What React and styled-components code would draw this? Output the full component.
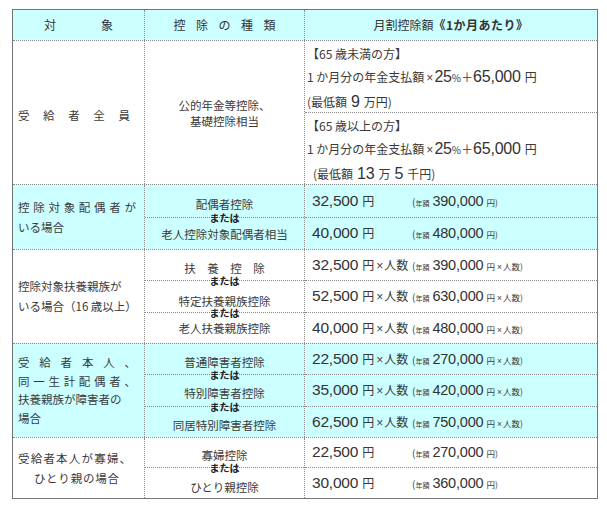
import React from "react";
import styled, { createGlobalStyle } from "styled-components";

const TINT = "#ccffff";
const LINE = "1px dotted #8a8a8a";

const GlobalStyle = createGlobalStyle`
  html, body {
    margin: 0;
    padding: 0;
    background: #fff;
  }
  body {
    font-family: "Noto Sans CJK JP", "Noto Sans", sans-serif;
    color: #3a3a3a;
  }
`;

const Page = styled.div`
  padding: 9px 0 0 12px;
`;

const Table = styled.div`
  width: 586px;
  border: 1.5px solid #767676;
  box-sizing: border-box;
`;

const Row = styled.div`
  display: grid;
  grid-template-columns: 132px 160px 1fr;
  height: ${(p) => p.$h}px;
  box-sizing: border-box;
  background: ${(p) => (p.$tint ? TINT : "#fff")};
  & + & {
    border-top: ${LINE};
  }
`;

const Col = styled.div`
  display: flex;
  flex-direction: column;
  min-width: 0;
  box-sizing: border-box;
  border-right: ${(p) => (p.$last ? "none" : LINE)};
`;

const HeadCell = styled(Col)`
  align-items: center;
  justify-content: center;
  font-size: 12px;
  color: #333;
`;

const Spread = styled.div`
  display: flex;
  gap: ${(p) => p.$gap}px;
`;

const Bold = styled.span`
  font-weight: 700;
  letter-spacing: 0.5px;
`;

const LabelCol = styled(Col)`
  justify-content: center;
  padding: ${(p) => p.$pt || 0}px ${(p) => p.$pr ?? 8}px 0 5px;
  font-size: 11.5px;
`;

const Line = styled.div`
  line-height: ${(p) => p.$lh}px;
  white-space: nowrap;
  letter-spacing: ${(p) => p.$ls || 0}px;
  text-align: ${(p) => (p.$justify ? "justify" : p.$center ? "center" : "left")};
  text-align-last: ${(p) => (p.$justify ? "justify" : p.$center ? "center" : "left")};
`;

const Sub = styled.div`
  position: relative;
  height: ${(p) => p.$h}px;
  box-sizing: border-box;
  display: flex;
  align-items: center;
  justify-content: ${(p) => (p.$center ? "center" : "flex-start")};
  padding-top: ${(p) => (p.$shift || 0) * 2}px;
  font-size: 11.5px;
  & + & {
    border-top: ${LINE};
  }
`;

const KindText = styled.div`
  text-align: center;
  line-height: ${(p) => p.$lh || 13}px;
  white-space: nowrap;
`;

const Or = styled.span`
  position: absolute;
  top: -5px;
  left: 50%;
  transform: translateX(-50%);
  font-size: 10px;
  line-height: 10px;
  font-weight: 700;
  color: #222;
  white-space: nowrap;
`;

const Formula = styled.div`
  height: ${(p) => p.$h}px;
  box-sizing: border-box;
  padding: 1px 0 0 2px;
  font-size: 12px;
  line-height: 23px;
  white-space: nowrap;
  & + & {
    border-top: ${LINE};
  }
`;

const Indent = styled.div`
  padding-left: ${(p) => p.$pl || 0}px;
`;

const Num = styled.span`
  font-family: "Liberation Sans", Arial, sans-serif;
  font-size: ${(p) => p.$size}px;
  color: #333;
  letter-spacing: ${(p) => p.$ls ?? -0.2}px;
  margin-left: ${(p) => p.$ml || 0}px;
`;

const Jp = styled.span`
  font-size: ${(p) => p.$size}px;
  color: #3a3a3a;
  margin-left: ${(p) => p.$ml || 0}px;
`;

const Times = styled.span`
  font-family: "Liberation Sans", Arial, sans-serif;
  font-size: ${(p) => p.$size}px;
  color: #444;
  margin: 0 1px 0 2px;
`;

const Amount = styled.div`
  display: flex;
  align-items: baseline;
  padding-left: 7px;
  white-space: nowrap;
`;

const Main = styled.span`
  width: 100px;
  flex-shrink: 0;
`;

const rows = [
  {
    h: 65,
    tint: true,
    subs: [32, 32],
    lh: 20,
    label: [
      { t: "控 除 対 象 配 偶 者 が", j: true },
      { t: "いる場合" },
    ],
    items: [
      { kind: "配偶者控除", shift: 4, amt: "32,500", annual: "390,000" },
      { kind: "老人控除対象配偶者相当", shift: 1, amt: "40,000", annual: "480,000" },
    ],
  },
  {
    h: 94,
    subs: [30, 32, 31],
    lh: 20,
    label: [{ t: "控除対象扶養親族が" }, { t: "いる場合（16 歳以上）" }],
    items: [
      { kind: "扶　養　控　除", shift: 4, amt: "32,500", annual: "390,000", per: true },
      { kind: "特定扶養親族控除", shift: 5, amt: "52,500", annual: "630,000", per: true },
      { kind: "老人扶養親族控除", shift: 1, amt: "40,000", annual: "480,000", per: true },
    ],
  },
  {
    h: 94,
    tint: true,
    subs: [30, 32, 31],
    lh: 18.5,
    label: [
      { t: "受 給 者 本 人 、", j: true },
      { t: "同 一 生 計 配 偶 者 、", j: true },
      { t: "扶養親族が障害者の" },
      { t: "場合" },
    ],
    items: [
      { kind: "普通障害者控除", shift: 3.5, amt: "22,500", annual: "270,000", per: true },
      { kind: "特別障害者控除", shift: 3, amt: "35,000", annual: "420,000", per: true },
      { kind: "同居特別障害者控除", shift: 4, amt: "62,500", annual: "750,000", per: true },
    ],
  },
  {
    h: 61.5,
    subs: [29, 31.5],
    lh: 20,
    label: [
      { t: "受給者本人が寡婦、", ls: 1.2 },
      { t: "ひとり親の場合", c: true, ls: 0.8 },
    ],
    items: [
      { kind: "寡婦控除", shift: 3.5, amt: "22,500", annual: "270,000" },
      { kind: "ひとり親控除", shift: 5, amt: "30,000", annual: "360,000" },
    ],
  },
];

function AmountLine({ amt, annual, per }) {
  return (
    <Amount>
      <Main>
        <Num $size={15.5}>{amt}</Num>
        <Jp $size={12} $ml={4}>円</Jp>
        {per && (
          <>
            <Times $size={12}>×</Times>
            <Jp $size={12}>人数</Jp>
          </>
        )}
      </Main>
      <Jp $size={10}>(</Jp>
      <Jp $size={7}>年額</Jp>
      <Num $size={14.5} $ml={3}>{annual}</Num>
      <Jp $size={8.5} $ml={3}>円</Jp>
      {per && (
        <>
          <Times $size={8.5}>×</Times>
          <Jp $size={8.5}>人数</Jp>
        </>
      )}
      <Jp $size={8.5}>)</Jp>
    </Amount>
  );
}

function Label({ lines, lh, pr, pt }) {
  return (
    <LabelCol $pr={pr} $pt={pt}>
      {lines.map((l, i) => (
        <Line key={i} $lh={lh} $justify={l.j} $center={l.c} $ls={l.ls}>
          {l.t}
        </Line>
      ))}
    </LabelCol>
  );
}

function Monthly({ head }) {
  return (
    <>
      <div>{head}</div>
      <div>
        <Jp $size={12}>1 か月分の年金支払額</Jp>
        <Times $size={12}>×</Times>
        <Num $size={16}>25</Num>
        <Jp $size={10}>%</Jp>
        <Jp $size={12}>＋</Jp>
        <Num $size={16}>65,000</Num>
        <Jp $size={12} $ml={4}>円</Jp>
      </div>
    </>
  );
}

export default function App() {
  return (
    <>
      <GlobalStyle />
      <Page>
        <Table>
          <Row $h={29.5} $tint>
            <HeadCell>
              <Spread $gap={45}>
                <span>対</span>
                <span>象</span>
              </Spread>
            </HeadCell>
            <HeadCell>
              <Spread $gap={10.5}>
                {"控除の種類".split("").map((c) => (
                  <span key={c}>{c}</span>
                ))}
              </Spread>
            </HeadCell>
            <HeadCell $last>
              <div>
                月割控除額<Bold>《1か月あたり》</Bold>
              </div>
            </HeadCell>
          </Row>

          <Row $h={144}>
            <Label lines={[{ t: "受 給 者 全 員", j: true }]} lh={20} pr={14} pt={5} />
            <Col>
              <Sub $h={143} $center $shift={1}>
                <KindText $lh={16}>
                  公的年金等控除、
                  <br />
                  　基礎控除相当
                </KindText>
              </Sub>
            </Col>
            <Col $last>
              <Formula $h={71}>
                <Monthly head="【65 歳未満の方】" />
                <div>
                  <Jp $size={12}>(最低額</Jp>
                  <Num $size={16} $ml={4}>9</Num>
                  <Jp $size={12} $ml={4}>万円)</Jp>
                </div>
              </Formula>
              <Formula $h={72}>
                <Monthly head="【65 歳以上の方】" />
                <Indent $pl={6}>
                  <Jp $size={12}>(最低額</Jp>
                  <Num $size={16} $ml={4}>13</Num>
                  <Jp $size={12} $ml={4}>万</Jp>
                  <Num $size={16} $ml={4}>5</Num>
                  <Jp $size={12} $ml={4}>千円)</Jp>
                </Indent>
              </Formula>
            </Col>
          </Row>

          {rows.map((r, ri) => (
            <Row key={ri} $h={r.h} $tint={r.tint}>
              <Label lines={r.label} lh={r.lh} />
              <Col>
                {r.items.map((it, i) => (
                  <Sub key={i} $h={r.subs[i]} $center $shift={it.shift}>
                    {i > 0 && <Or>または</Or>}
                    <KindText>{it.kind}</KindText>
                  </Sub>
                ))}
              </Col>
              <Col $last>
                {r.items.map((it, i) => (
                  <Sub key={i} $h={r.subs[i]}>
                    <AmountLine amt={it.amt} annual={it.annual} per={it.per} />
                  </Sub>
                ))}
              </Col>
            </Row>
          ))}
        </Table>
      </Page>
    </>
  );
}
